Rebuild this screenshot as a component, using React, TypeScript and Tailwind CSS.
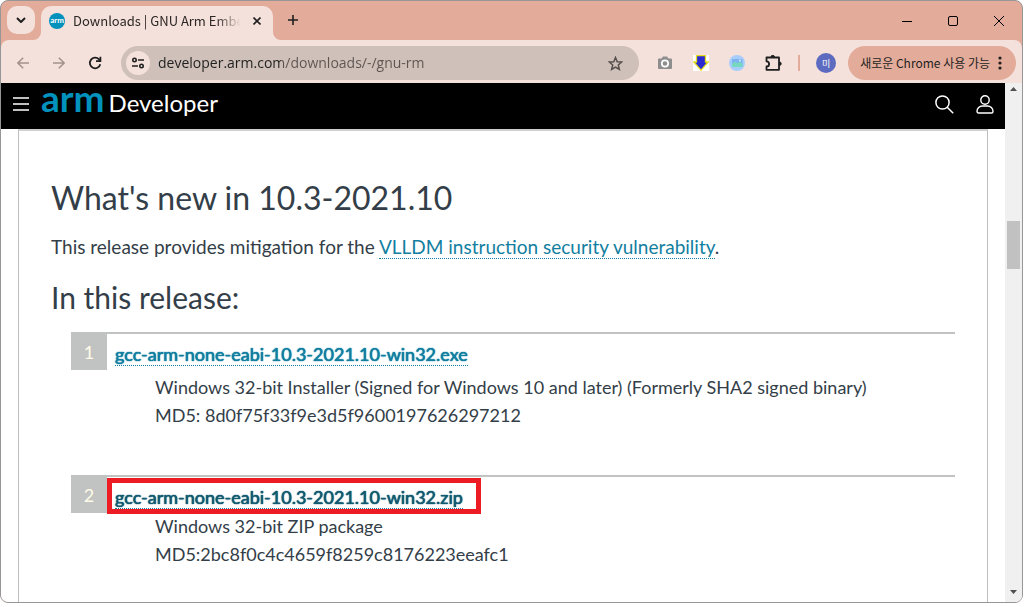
import React, { useState } from "react";

interface Download {
  id: number;
  file: string;
  description: string;
  checksum: string;
  visited?: boolean;
  highlighted?: boolean;
}

const downloads: Download[] = [
  {
    id: 1,
    file: "gcc-arm-none-eabi-10.3-2021.10-win32.exe",
    description: "Windows 32-bit Installer (Signed for Windows 10 and later) (Formerly SHA2 signed binary)",
    checksum: "MD5: 8d0f75f33f9e3d5f9600197626297212",
  },
  {
    id: 2,
    file: "gcc-arm-none-eabi-10.3-2021.10-win32.zip",
    description: "Windows 32-bit ZIP package",
    checksum: "MD5:2bc8f0c4c4659f8259c8176223eeafc1",
    visited: true,
    highlighted: true,
  },
];

const TabStrip: React.FC = () => (
  <div className="flex h-[39px] shrink-0 items-end">
    <button aria-label="Search tabs" className="mb-[6px] ml-[6px] flex size-7 items-center justify-center rounded-[10px] bg-[#f5e1db]">
      <svg width="10" height="6" viewBox="0 0 10 6" fill="none" stroke="#1f1f1f" strokeWidth="2">
        <path d="M1 1l4 4 4-4" />
      </svg>
    </button>

    {/* Active tab */}
    <div className="relative ml-[6px] flex h-[34px] w-[232px] items-center rounded-t-[10px] bg-[#f5e1db] pb-[5px] pl-2">
      <svg className="absolute bottom-0 -left-2" width="8" height="8" viewBox="0 0 8 8">
        <path d="M8 0v8H0a8 8 0 0 0 8-8z" fill="#f5e1db" />
      </svg>
      <svg className="absolute bottom-0 -right-2" width="8" height="8" viewBox="0 0 8 8">
        <path d="M0 0v8h8a8 8 0 0 1-8-8z" fill="#f5e1db" />
      </svg>
      <span className="flex size-4 shrink-0 items-center justify-center rounded-full bg-[#0091bd] pb-px font-['Lato'] text-[8px] leading-none font-bold text-white">
        arm
      </span>
      <span className="ml-2 w-[168px] mask-r-from-85% mask-r-to-100% text-[13px] leading-5 whitespace-nowrap text-[#2b2624]">
        Downloads | GNU Arm Embed
      </span>
      <button aria-label="Close tab" className="ml-2 flex size-4 items-center justify-center">
        <svg width="8" height="8" viewBox="0 0 8 8" stroke="#1f1f1f" strokeWidth="1.6">
          <path d="M0.5 0.5l7 7M7.5 0.5l-7 7" />
        </svg>
      </button>
    </div>

    <button aria-label="New tab" className="mb-3 ml-3 flex size-4 items-center justify-center">
      <svg width="10" height="10" viewBox="0 0 10 10" stroke="#1f1f1f" strokeWidth="1.6">
        <path d="M5 0v10M0 5h10" />
      </svg>
    </button>

    {/* Window controls */}
    <div className="ml-auto flex h-[39px] text-black">
      <button aria-label="Minimize" className="flex w-[46px] items-center justify-center">
        <svg width="10" height="10" viewBox="0 0 10 10" stroke="currentColor">
          <path d="M0 5.5h10" />
        </svg>
      </button>
      <button aria-label="Maximize" className="flex w-[46px] items-center justify-center">
        <svg width="10" height="10" viewBox="0 0 10 10" fill="none" stroke="currentColor">
          <rect x="0.5" y="0.5" width="9" height="9" rx="1.5" />
        </svg>
      </button>
      <button aria-label="Close" className="flex w-[46px] items-center justify-center">
        <svg width="10" height="10" viewBox="0 0 10 10" stroke="currentColor">
          <path d="M0 0l10 10M10 0L0 10" />
        </svg>
      </button>
    </div>
  </div>
);

const Toolbar: React.FC = () => {
  const [url, setUrl] = useState("developer.arm.com/downloads/-/gnu-rm");

  return (
    <div className="flex h-[43px] shrink-0 items-center rounded-t-lg bg-[#f5e1db] pt-[3px] pr-[6px] pl-[14px]">
      <div className="flex gap-5">
        <button aria-label="Back" className="flex size-4 items-center justify-center">
          <svg width="12" height="12" viewBox="0 0 12 12" fill="none" stroke="#a3918c" strokeWidth="1.5">
            <path d="M12 6H1M6.2 0.7L0.9 6l5.3 5.3" />
          </svg>
        </button>
        <button aria-label="Forward" className="flex size-4 items-center justify-center">
          <svg width="12" height="12" viewBox="0 0 12 12" fill="none" stroke="#a3918c" strokeWidth="1.5">
            <path d="M0 6h11M5.8 0.7L11.1 6l-5.3 5.3" />
          </svg>
        </button>
        <button aria-label="Reload" className="flex size-4 items-center justify-center">
          <svg width="14" height="14" viewBox="0 0 14 14" fill="none" stroke="#1f1f1f" strokeWidth="1.8">
            <path d="M12.3 8.3A5.3 5.3 0 1 1 11 3.3l1.5 1.5" />
            <path d="M12.4 0.8v4.4H8" />
          </svg>
        </button>
      </div>

      {/* Address bar */}
      <div className="ml-[18px] flex h-[34px] min-w-0 flex-1 items-center rounded-full bg-[#cfc0b9] pr-4 pl-[5px]">
        <button aria-label="Site information" className="flex size-6 shrink-0 items-center justify-center rounded-full bg-[#f5e1db]">
          <svg width="12" height="12" viewBox="0 0 12 12" fill="none" stroke="#1f1f1f" strokeWidth="1.6">
            <circle cx="2.5" cy="3" r="1.7" />
            <path d="M6 3h6M0 9h6" />
            <circle cx="9.5" cy="9" r="1.7" />
          </svg>
        </button>
        {/* Host is darker than the path */}
        <input
          aria-label="Address"
          className="ml-2 min-w-0 flex-1 bg-[linear-gradient(to_right,#1f1f1f_123px,#5d5451_123px)] bg-clip-text font-['Open_Sans',sans-serif] text-sm leading-5 text-transparent caret-black outline-none"
          value={url}
          onChange={(e) => setUrl(e.target.value)}
        />
        <button aria-label="Bookmark this page" className="flex size-4 items-center justify-center">
          <svg width="15" height="15" viewBox="0 0 14 14" fill="none" stroke="#574f4c" strokeWidth="1.4">
            <path d="M7 1.4l1.6 3.9 4.2.3-3.2 2.8 1 4.1L7 10.3l-3.6 2.2 1-4.1L1.2 5.6l4.2-.3z" />
          </svg>
        </button>
      </div>

      {/* Extensions */}
      <div className="ml-[18px] flex items-center gap-5">
        <button aria-label="Screen capture" className="size-4">
          <svg width="16" height="16" viewBox="0 0 16 16">
            <path d="M2 3.5h2.5L6 1.5h4l1.5 2H14a1 1 0 0 1 1 1V13a1 1 0 0 1-1 1H2a1 1 0 0 1-1-1V4.5a1 1 0 0 1 1-1z" fill="#8e8e8e" />
            <circle cx="8" cy="8.5" r="3.2" fill="#8e8e8e" stroke="#fff" strokeWidth="1.7" />
          </svg>
        </button>
        <button aria-label="Downloader" className="size-4">
          <svg width="16" height="16" viewBox="0 0 16 16">
            <rect width="16" height="16" fill="#fff" />
            <path d="M3.5 0.7h9v6.3h2.7L8 15.2 0.8 7h2.7z" fill="#2a2ad0" stroke="#e4dc1c" strokeWidth="1.3" />
          </svg>
        </button>
        <button aria-label="Image viewer" className="size-4">
          <svg width="16" height="16" viewBox="0 0 16 16">
            <circle cx="8" cy="8" r="8" fill="#a6cdfb" />
            <rect x="3" y="4" width="10.5" height="8" fill="#7fb2f0" />
            <path d="M3 12V9l3-2.5 2.5 2L11 6.5 13.5 9v3z" fill="#76d9bd" />
            <circle cx="11" cy="5.5" r="1" fill="#d5ecff" />
          </svg>
        </button>
        <button aria-label="Extensions" className="size-4">
          <svg width="17" height="16" viewBox="0 0 17 16" fill="none" stroke="#1f1f1f" strokeWidth="1.8" strokeLinejoin="round">
            <path d="M1.5 2.5h12.5v12.3H1.5v-3.3a2.6 2.6 0 0 0 0-5.2z" />
            <path d="M6 2a1.7 1.7 0 0 1 3.4 0zM14.5 7a1.7 1.7 0 0 1 0 3.4z" fill="#1f1f1f" strokeWidth="1" />
          </svg>
        </button>
      </div>
      <span className="ml-[17px] h-4 w-0.5 bg-[#e3ab99]" />
      <button className="ml-4 flex size-5 items-center justify-center rounded-full bg-[#5c6bc0] text-[9px] leading-none text-white">미</button>
      <button className="ml-3 flex h-[34px] items-center rounded-full bg-[#e3ab99] pr-[14px] pl-3 text-xs text-[#1f1f1f]">
        <span className="whitespace-nowrap">새로운 Chrome 사용 가능</span>
        <svg className="ml-2" width="4" height="14" viewBox="0 0 4 14" fill="#1f1f1f">
          <circle cx="2" cy="2" r="1.6" />
          <circle cx="2" cy="7" r="1.6" />
          <circle cx="2" cy="12" r="1.6" />
        </svg>
      </button>
    </div>
  );
};

const SiteHeader: React.FC = () => (
  <header className="flex h-[46px] shrink-0 items-center bg-black pr-[11px] pl-3 text-white">
    <button aria-label="Menu" className="pb-1">
      <svg width="16" height="14" viewBox="0 0 16 14" stroke="currentColor" strokeWidth="1.5">
        <path d="M0 1h16M0 7h16M0 13h16" />
      </svg>
    </button>
    <a href="#home" className="ml-3 flex items-baseline pb-[14px]">
      <span className="text-[37px] leading-[38px] font-bold text-[#0091bd]">arm</span>
      <span className="ml-1 text-2xl">Developer</span>
    </a>
    <div className="ml-auto flex items-center gap-[22px] pb-1">
      <button aria-label="Search">
        <svg width="19" height="19" viewBox="0 0 19 19" fill="none" stroke="currentColor" strokeWidth="1.5">
          <circle cx="7.5" cy="7.5" r="6.6" />
          <path d="M12.2 12.2l6 6" />
        </svg>
      </button>
      <button aria-label="Account">
        <svg width="18" height="19" viewBox="0 0 18 19" fill="none" stroke="currentColor" strokeWidth="1.4">
          <circle cx="9" cy="5" r="4.2" />
          <path d="M1 16.5a5.5 5.5 0 0 1 5.5-5.5h5a5.5 5.5 0 0 1 5.5 5.5 1.5 1.5 0 0 1-1.5 1.5h-13A1.5 1.5 0 0 1 1 16.5z" />
        </svg>
      </button>
    </div>
  </header>
);

const DownloadItem: React.FC<{ item: Download }> = ({ item }) => (
  <li className="flex h-[143px]">
    <span className="flex h-[38px] w-9 shrink-0 items-center justify-center bg-[#c1c3c2] pt-0.5 text-lg text-[#fffbe8]">
      {item.id}
    </span>
    <div className="relative flex-1 border-t-2 border-[#c1c3c2] pt-[6px] pl-2 leading-7">
      <a
        href={`#${item.file}`}
        className={`inline-block border-b border-dotted border-[#127ea0] leading-[22px] text-shadow-[0_0_1px_currentColor,0_0_1px_currentColor] ${
          item.visited ? "text-[#125a70]" : "text-[#127ea0]"
        }`}
      >
        {item.file}
      </a>
      <div className={`pl-10 ${item.highlighted ? "pt-px" : "pt-[5px]"}`}>
        <p>{item.description}</p>
        <p>{item.checksum}</p>
      </div>
      {item.highlighted && <span className="absolute top-px left-0 h-9 w-[374px] border-[5px] border-[#ed1c24]" />}
    </div>
  </li>
);

const ScrollBar: React.FC = () => (
  <div className="flex w-[17px] shrink-0 flex-col items-center bg-[#f0f0f0] py-1">
    <svg width="7" height="4" viewBox="0 0 7 4" fill="#505050">
      <path d="M3.5 0L7 4H0z" />
    </svg>
    <div className="mt-[130px] h-12 w-[13px] bg-[#c1c1c1]" />
    <svg className="mt-auto mb-1" width="7" height="4" viewBox="0 0 7 4" fill="#505050">
      <path d="M3.5 4L7 0H0z" />
    </svg>
  </div>
);

const App: React.FC = () => {
  return (
    <div className="h-screen bg-white pr-px pb-1 font-['Noto_Sans_CJK_KR',sans-serif]">
      <div className="flex h-full flex-col overflow-hidden rounded-lg border border-[#969696] bg-[#e3ab99]">
        <TabStrip />
        <Toolbar />
        <div className="flex min-h-0 flex-1 bg-white font-['Lato',sans-serif]">
          <div className="flex min-w-0 flex-1 flex-col">
            <SiteHeader />
            <main className="mx-[17px] min-h-0 flex-1 overflow-hidden border-x border-t-2 border-x-[#bdbdbd] border-t-[#d0d0d0] px-8 pt-[47px] text-lg leading-7 text-[#333e48]">
              <h1 className="text-[32px] leading-10">What's new in 10.3-2021.10</h1>
              <p className="mt-[15px] text-[19px] leading-7">
                This release provides mitigation for the{" "}
                <a href="#vlldm" className="border-b border-dotted border-[#127ea0] text-[#127ea0]">
                  VLLDM instruction security vulnerability
                </a>
                .
              </p>
              <h2 className="mt-4 text-3xl leading-10">In this release:</h2>
              <ol className="mt-[15px] ml-5">
                {downloads.map((item) => (
                  <DownloadItem key={item.id} item={item} />
                ))}
              </ol>
            </main>
          </div>
          <ScrollBar />
        </div>
      </div>
    </div>
  );
};

export default App;
